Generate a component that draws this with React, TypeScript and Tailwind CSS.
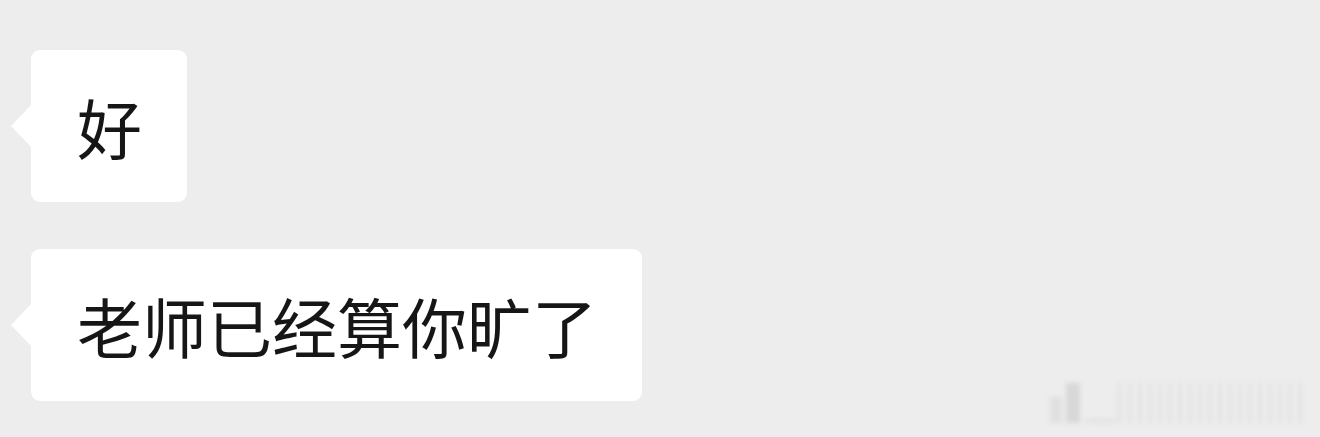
import React from "react";

// Chat screenshot: two incoming message bubbles on a gray background

const messages = ["好", "老师已经算你旷了"];

function Bubble({ text }: { text: string }) {
    return (
        <div className="relative self-start">
            {/* tail */}
            <div className="absolute left-[-20px] top-[54px] h-0 w-0 border-y-[22px] border-r-[21px] border-y-transparent border-r-white" />
            <div className="flex h-[152px] items-center rounded-[9px] bg-white pl-[46px] pr-[45px] text-[65px] leading-none text-[#161616]">
                {text}
            </div>
        </div>
    );
}

export default function App() {
    return (
        <div
            className="relative h-[437px] w-[1320px] overflow-hidden bg-[#ededed]"
            style={{ fontFamily: '"Noto Sans CJK SC", "Noto Sans", sans-serif' }}
        >
            <div className="flex flex-col gap-[47px] pl-[31px] pt-[50px]">
                {messages.map((m, i) => (
                    <Bubble key={i} text={m} />
                ))}
            </div>

            {/* faint watermark */}
            <div className="absolute left-[1050px] top-[383px] flex h-[40px] items-end blur-[2px]">
                <div className="h-[26px] w-[12px] bg-[#e0e0e0]" />
                <div className="ml-[4px] h-[40px] w-[14px] bg-[#d8d8d8]" />
                <div className="ml-[6px] h-[4px] w-[30px] bg-[#e2e2e2]" />
                <div className="ml-[2px] flex h-[40px] gap-[6px]">
                    {Array.from({ length: 19 }).map((_, i) => (
                        <div key={i} className="h-full w-[4px] bg-[#e3e3e3]" />
                    ))}
                </div>
            </div>
        </div>
    );
}
